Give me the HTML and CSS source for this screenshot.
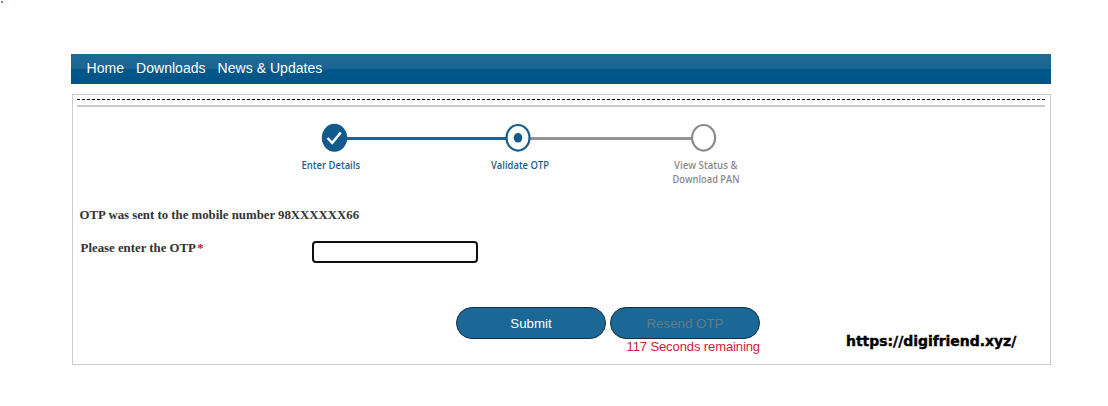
FILE: index.html
```html
<!DOCTYPE html>
<html lang="en">

<head>
  <meta charset="UTF-8">
  <title>Validate OTP</title>
  <link rel="stylesheet" href="styles.css">
</head>

<body>
  <span class="dot"></span>

  <nav class="menu">
    <a href="#">Home</a>
    <a href="#">Downloads</a>
    <a href="#">News &amp; Updates</a>
  </nav>

  <div class="panel">
    <svg class="dashes" width="969" height="1">
      <line x1="0" y1="0.5" x2="969" y2="0.5" stroke="#111" stroke-dasharray="3 2" />
    </svg>
    <div class="rule"></div>

    <svg class="steps" width="480" height="72" viewBox="290 118 480 72">
      <path d="M346 138.5H506" stroke="#1b6390" stroke-width="2.8" />
      <path d="M530 138.5H692" stroke="#929292" stroke-width="2.8" />
      <ellipse cx="334.5" cy="137.8" rx="12.7" ry="14" fill="#125a8c" />
      <path d="M327.5 138l4.7 4.8 8.6-10.3" fill="none" stroke="#fff" stroke-width="2.5" />
      <ellipse cx="518" cy="137.8" rx="11.5" ry="12.8" fill="#fff" stroke="#1b5e8c" stroke-width="2.2" />
      <ellipse cx="518" cy="137.8" rx="4.3" ry="4.8" fill="#125a8c" />
      <ellipse cx="703.6" cy="137.8" rx="11.5" ry="12.8" fill="#fff" stroke="#8b8b8b" stroke-width="2.2" />
      <text class="step-done" x="301.5" y="168.6" textLength="58.5" lengthAdjust="spacingAndGlyphs">Enter Details</text>
      <text class="step-done" x="491" y="169.3" textLength="58" lengthAdjust="spacingAndGlyphs">Validate OTP</text>
      <text class="step-next" x="674" y="169.3" textLength="63.5" lengthAdjust="spacingAndGlyphs">View Status &amp;</text>
      <text class="step-next" x="672.5" y="183.4" textLength="67" lengthAdjust="spacingAndGlyphs">Download PAN</text>
    </svg>

    <p class="sent">OTP was sent to the mobile number 98XXXXXX66</p>

    <div class="field">
      <label for="otp">Please enter the OTP <span class="required">*</span></label>
      <input type="text" id="otp">
    </div>

    <div class="actions">
      <button class="btn">Submit</button>
      <div class="resend">
        <button class="btn" disabled>Resend OTP</button>
        <span class="timer">117 Seconds remaining</span>
      </div>
      <span class="site">https://digifriend.xyz/</span>
    </div>
  </div>
</body>

</html>
```
FILE: styles.css
```css
body {
  margin: 0;
  padding-top: 54px;
  background: #fff;
  font-family: "Liberation Sans", Arial, sans-serif;
  overflow: hidden;
}

.dot {
  position: absolute;
  top: 1px;
  left: 1px;
  width: 2px;
  height: 2px;
  background: #c4797c;
}

.menu {
  display: flex;
  gap: 12px;
  box-sizing: border-box;
  width: 980px;
  height: 30px;
  margin-left: 71px;
  padding-left: 15.6px;
  background: linear-gradient(#1f6a97 0, #1a6592 50%, #00578a 50%, #005487 100%);
}

.menu a {
  color: #fff;
  font-size: 14px;
  line-height: 29px;
  letter-spacing: 0.03px;
  text-decoration: none;
}

.panel {
  box-sizing: border-box;
  width: 979px;
  height: 271px;
  margin: 10px 0 0 72px;
  padding: 4px 5px 0 4px;
  border: 1px solid #ccc;
}

.dashes {
  display: block;
}

.rule {
  height: 2px;
  margin-top: 5px;
  background: #c9c9c9;
}

.steps {
  display: block;
  margin: 11px 0 0 213px;
  font: 10.5px "Open Sans", "Noto Sans", sans-serif;
}

.step-done {
  fill: #1b5e8c;
  font-weight: 600;
}

.step-next {
  fill: #8b8b8b;
  font-weight: 600;
}

.sent {
  margin: 17px 0 0 2.6px;
  color: #333;
  font: bold 12.8px/16px "Liberation Serif", "Times New Roman", serif;
}

.field {
  display: flex;
  margin: 18px 0 0 3.6px;
}

.field label {
  width: 231.4px;
  color: #333;
  font: bold 12.8px/14px "Liberation Serif", "Times New Roman", serif;
}

.required {
  margin-left: -1px;
  color: #c8102e;
}

.field input {
  box-sizing: border-box;
  width: 166px;
  height: 22px;
  border: 2px solid #101010;
  border-radius: 4px;
  outline: none;
}

.actions {
  display: flex;
  gap: 4px;
  margin: 44px 0 0 379px;
}

.btn {
  display: block;
  width: 150px;
  height: 32px;
  border: 1px solid #17303f;
  border-radius: 16px;
  background: #1b6796;
  color: #fff;
  font: 13.33px "Liberation Sans", Arial, sans-serif;
}

.btn:disabled {
  color: #667a86;
}

.timer {
  display: block;
  color: #d2203a;
  font-size: 13px;
  line-height: 15px;
  letter-spacing: -0.1px;
  text-align: right;
}

.site {
  margin: 24px 0 0 82px;
  color: #000;
  font: bold 14px/20px "DejaVu Sans", Verdana, sans-serif;
  letter-spacing: -0.04px;
  -webkit-text-stroke: 0.4px #000;
}
```
